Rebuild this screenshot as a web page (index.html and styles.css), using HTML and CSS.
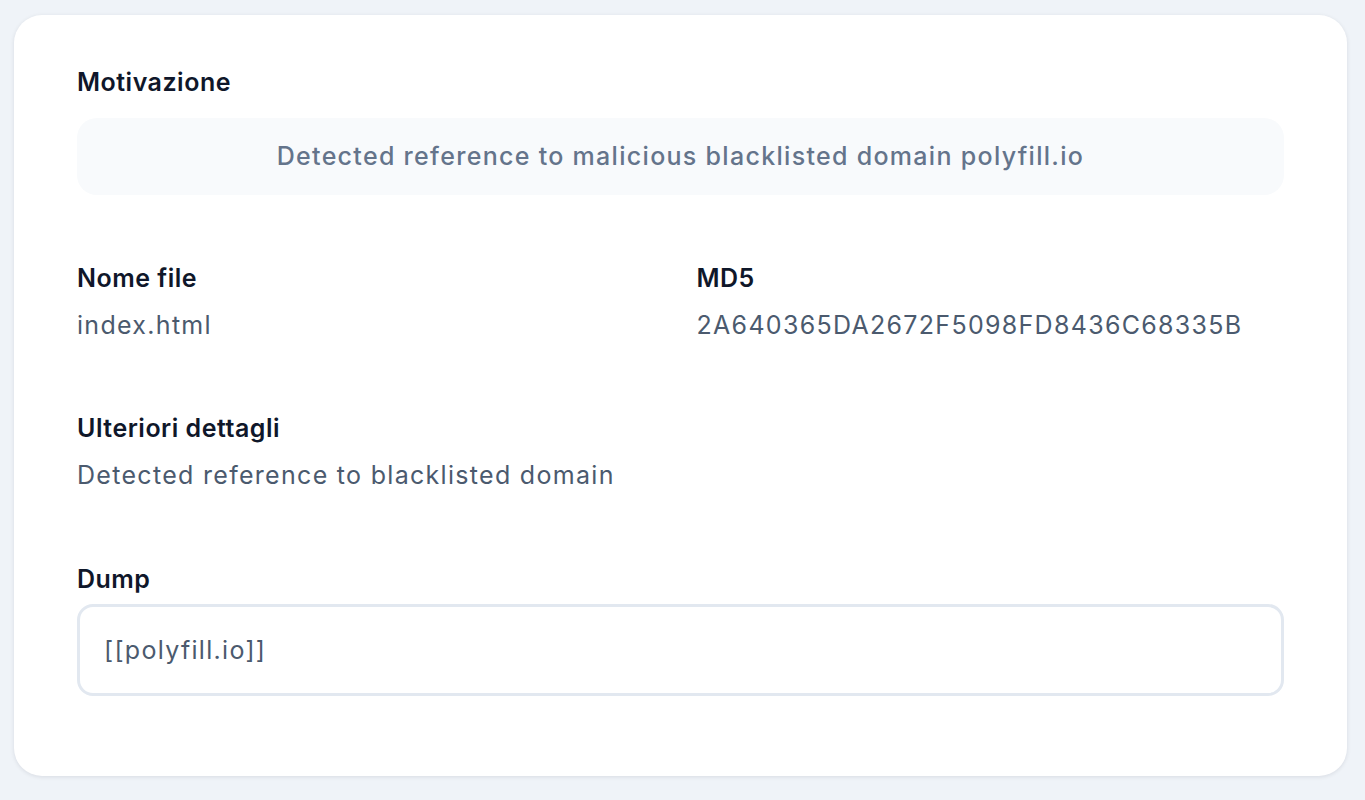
FILE: index.html
```html
<!DOCTYPE html>
<html lang="it">
<head>
<meta charset="utf-8">
<title>Dettagli</title>
<link rel="stylesheet" href="styles.css">
</head>
<body>
<main class="card">
  <section class="field">
    <h2 class="label">Motivazione</h2>
    <div class="reason">Detected reference to malicious blacklisted domain polyfill.io</div>
  </section>
  <section class="grid">
    <div class="field">
      <h2 class="label">Nome file</h2>
      <p class="value">index.html</p>
    </div>
    <div class="field">
      <h2 class="label">MD5</h2>
      <p class="value">2A640365DA2672F5098FD8436C68335B</p>
    </div>
  </section>
  <section class="field">
    <h2 class="label">Ulteriori dettagli</h2>
    <p class="value">Detected reference to blacklisted domain</p>
  </section>
  <section class="field">
    <h2 class="label tight">Dump</h2>
    <div class="dump">[[polyfill.io]]</div>
  </section>
</main>
</body>
</html>
```

FILE: styles.css
```css
* { box-sizing: border-box; }
html, body { margin: 0; padding: 0; }
body {
  background: #eff3f8;
  font-family: Inter, "Noto Sans", "Liberation Sans", sans-serif;
  padding: 15px 18px 0 14px;
  height: 800px;
  overflow: hidden;
}
.card {
  background: #ffffff;
  border-radius: 28px;
  box-shadow: 0 1px 4px rgba(15, 23, 42, 0.10);
  padding: 51px 63px 80px 63px;
  display: flex;
  flex-direction: column;
}
.field { display: flex; flex-direction: column; }
.label {
  margin: 0 0 15px 0;
  font-size: 25px;
  line-height: 32px;
  font-weight: 600;
  color: #0f172a;
  letter-spacing: 0.5px;
}
.label.tight { margin-bottom: 9px; }
.reason {
  margin-top: 5px;
  background: #f8fafc;
  border-radius: 20px;
  padding: 22px 24px;
  line-height: 33px;
  font-size: 25px;
  letter-spacing: 1.3px;
  color: #64748b;
  text-align: center;
  font-weight: 500;
}
.grid {
  display: grid;
  grid-template-columns: 1fr 1fr;
  column-gap: 32px;
  margin-top: 67px;
}
.value {
  margin: 0;
  font-size: 25px;
  line-height: 32px;
  letter-spacing: 1.3px;
  color: #4b5a6e;
}
.grid + .field { margin-top: 71px; }
.field + .field { margin-top: 72px; }
.grid .field + .field { margin-top: 0; }
.dump {
  border: 3px solid #e2e8f0;
  border-radius: 16px;
  padding: 27px 24px;
  font-size: 25px;
  line-height: 32px;
  letter-spacing: 1.3px;
  color: #4b5a6e;
}
```
